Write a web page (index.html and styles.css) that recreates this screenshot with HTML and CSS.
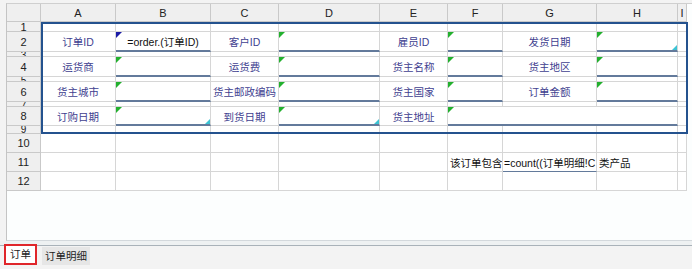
FILE: index.html
```html
<!DOCTYPE html>
<html lang="zh-CN">
<head>
    <meta charset="UTF-8">
    <meta name="viewport" content="width=device-width, initial-scale=1.0">
    <title>订单 - 报表设计</title>
    <link rel="stylesheet" href="styles.css">
</head>
<body>
    <div class="book">
        <div class="sheet">
            <div class="grid">
                <!-- column headers -->
                <div class="hd"></div><div class="hd">A</div><div class="hd">B</div><div class="hd">C</div><div class="hd">D</div><div class="hd">E</div><div class="hd">F</div><div class="hd">G</div><div class="hd">H</div><div class="hd">I</div>

                <!-- row 1 -->
                <div class="rh">1</div><div></div><div></div><div></div><div></div><div></div><div></div><div></div><div></div><div></div>
                <!-- row 2 -->
                <div class="rh">2</div>
                <div class="lb">订单ID</div>
                <div class="dt n">=order.(订单ID)</div>
                <div class="lb">客户ID</div>
                <div class="dt g"></div>
                <div class="lb">雇员ID</div>
                <div class="dt g"></div>
                <div class="lb">发货日期</div>
                <div class="dt g c"></div>
                <div></div>
                <!-- row 3 -->
                <div class="rh thin">3</div><div></div><div></div><div></div><div></div><div></div><div></div><div></div><div></div><div></div>
                <!-- row 4 -->
                <div class="rh">4</div>
                <div class="lb">运货商</div>
                <div class="dt g"></div>
                <div class="lb">运货费</div>
                <div class="dt g"></div>
                <div class="lb">货主名称</div>
                <div class="dt g"></div>
                <div class="lb">货主地区</div>
                <div class="dt g"></div>
                <div></div>
                <!-- row 5 -->
                <div class="rh thin">5</div><div></div><div></div><div></div><div></div><div></div><div></div><div></div><div></div><div></div>
                <!-- row 6 -->
                <div class="rh">6</div>
                <div class="lb">货主城市</div>
                <div class="dt g"></div>
                <div class="lb">货主邮政编码</div>
                <div class="dt g"></div>
                <div class="lb">货主国家</div>
                <div class="dt g"></div>
                <div class="lb">订单金额</div>
                <div class="dt g"></div>
                <div></div>
                <!-- row 7 -->
                <div class="rh thin">7</div><div></div><div></div><div></div><div></div><div></div><div></div><div></div><div></div><div></div>
                <!-- row 8 -->
                <div class="rh">8</div>
                <div class="lb">订购日期</div>
                <div class="dt g c"></div>
                <div class="lb">到货日期</div>
                <div class="dt g c"></div>
                <div class="lb">货主地址</div>
                <div class="dt g span3"></div>
                <div></div>
                <!-- row 9 -->
                <div class="rh thin">9</div><div></div><div></div><div></div><div></div><div></div><div></div><div></div><div></div><div></div>
                <!-- row 10 -->
                <div class="rh">10</div><div></div><div></div><div></div><div></div><div></div><div></div><div></div><div></div><div></div>
                <!-- row 11 -->
                <div class="rh">11</div><div></div><div></div><div></div><div></div><div></div>
                <div class="txt">该订单包含</div>
                <div class="txt dt">=count((订单明细!C</div>
                <div class="txt">类产品</div>
                <div></div>
                <!-- row 12 -->
                <div class="rh">12</div><div></div><div></div><div></div><div></div><div></div><div></div><div></div><div></div><div></div>

                <!-- report block outline -->
                <div class="frame"></div>
            </div>
        </div>
        <div class="strip"></div>
        <div class="tabs">
            <div class="tab active">订单</div>
            <div class="tab">订单明细</div>
        </div>
    </div>
</body>
</html>
```

FILE: styles.css
```css
body {
    margin: 0;
    background: #f3f3f3;
    font-family: "Liberation Sans", "Noto Sans CJK SC", sans-serif;
    font-size: 10.5px;
    color: #111;
}
.book {
    width: 692px;
    height: 269px;
    display: flex;
    flex-direction: column;
    overflow: hidden;
}
.sheet {
    margin: 3px 0 0 6px;
    height: 236px;
    background: #fcfefe;
    border-top: 1px solid #cfcfcf;
    border-left: 1px solid #c4c4c4;
    border-bottom: 1px solid #d3d8dc;
    overflow: hidden;
}
.grid {
    position: relative;
    display: grid;
    width: 680px;
    grid-template-columns: 34px 75px 95px 68px 101px 68px 55px 94px 81px 9px;
    grid-template-rows: 18px 10px 20px 5px 20px 5px 20px 5px 19px 8px 19px 19px 19px;
    background: #fff;
}
.grid > div {
    position: relative;
    box-sizing: border-box;
    border-right: 1px solid #d6d6d6;
    border-bottom: 1px solid #d6d6d6;
    overflow: hidden;
    white-space: nowrap;
}
.grid > .hd,
.grid > .rh {
    background: #efefef;
    border-color: #c9c9c9;
    color: #222;
    font-size: 11px;
    display: flex;
    align-items: center;
    justify-content: center;
}
.grid > .rh.thin {
    align-items: flex-start;
    font-size: 10px;
    line-height: 8px;
}
.grid > .lb {
    display: flex;
    align-items: center;
    justify-content: center;
    color: #3f3f90;
}
.grid > .dt {
    border-bottom: 2px solid #637a9b;
    display: flex;
    align-items: center;
    justify-content: center;
}
.grid > .txt {
    display: flex;
    align-items: center;
    justify-content: flex-start;
    padding-left: 2px;
}
.grid > .txt.dt {
    padding-left: 1px;
    border-bottom-width: 1px;
}
.grid > .span3 {
    grid-column: span 3;
}

/* corner markers */
.g::before,
.n::before {
    content: "";
    position: absolute;
    left: 0;
    top: 0;
    border-style: solid;
    border-width: 6px 6px 0 0;
    border-color: #23b02e transparent transparent transparent;
}
.n::before {
    border-color: #1b1ba6 transparent transparent transparent;
}
.c::after {
    content: "";
    position: absolute;
    right: 0;
    bottom: 0;
    border-style: solid;
    border-width: 0 0 5px 5px;
    border-color: transparent transparent #3cc3d4 transparent;
}

.grid > .frame {
    position: absolute;
    grid-column: 2 / 11;
    grid-row: 2 / 11;
    inset: 0 -1px 0 0;
    border: 2px solid #24528e;
    pointer-events: none;
}

.strip {
    height: 4px;
    background: #eef1f2;
    border-bottom: 1px solid #a9b2b9;
}
.tabs {
    flex: 1;
    display: flex;
    align-items: flex-start;
    gap: 5px;
    padding-left: 4px;
    background: #f3f3f3;
}
.tab {
    height: 18px;
    margin-top: 1px;
    padding: 0 3px;
    background: #e6e6e6;
    color: #222;
    line-height: 18px;
    font-size: 10.5px;
}
.tab.active {
    height: 17px;
    margin-top: -2px;
    padding: 0 4px;
    background: #fff;
    line-height: 17px;
    border: 2px solid #e0262b;
}
```
